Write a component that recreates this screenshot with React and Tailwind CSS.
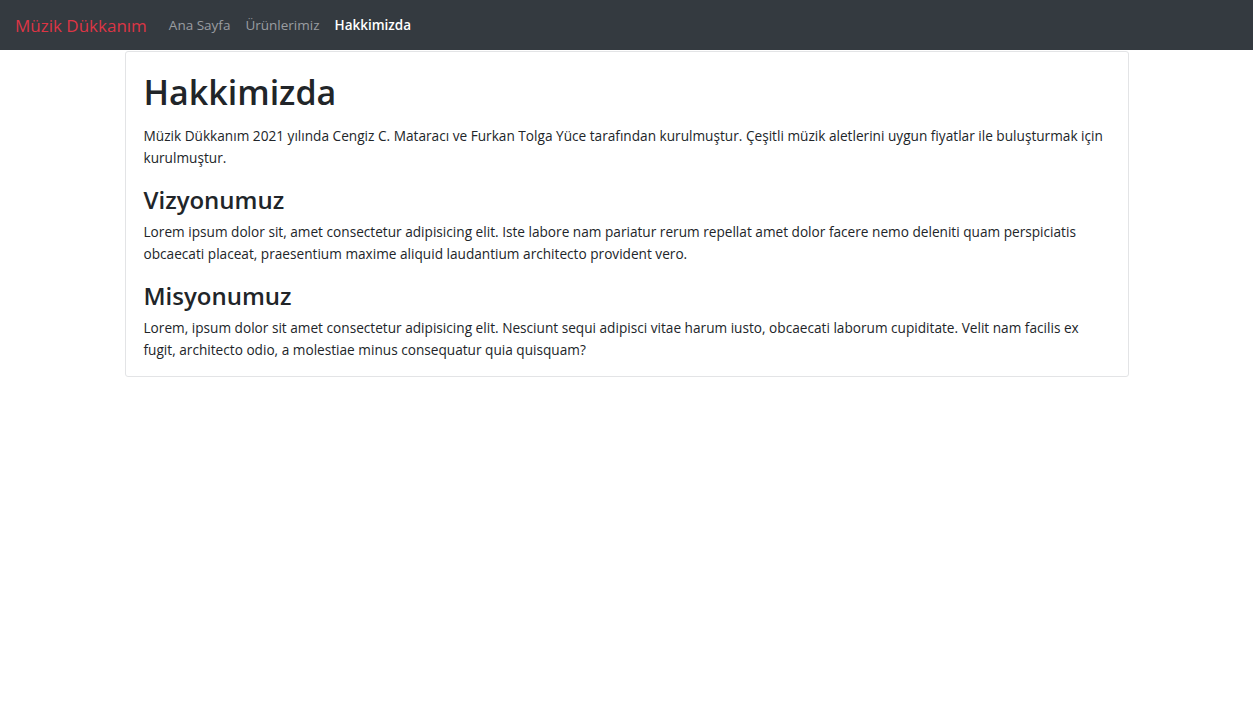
import React from 'react';

const NAV_LINKS = [
  { label: 'Ana Sayfa', active: false },
  { label: 'Ürünlerimiz', active: false },
  { label: 'Hakkimizda', active: true },
];

const font = { fontFamily: '"Open Sans", "Noto Sans", sans-serif' };

const App = () => {
  return (
    <div className="min-h-screen bg-white text-[#212529]" style={font}>
      {/* Navbar */}
      <nav className="h-[50px] bg-[#343a40] flex items-center px-[15px] pt-px">
        <a href="#" className="text-[#dc3545] text-[17px] mr-[22px]">
          Müzik Dükkanım
        </a>
        <div className="flex items-center gap-[15px] text-[13.5px]">
          {NAV_LINKS.map((link) => (
            <a
              key={link.label}
              href="#"
              className={link.active ? 'text-white font-semibold' : 'text-[#9a9da0]'}
            >
              {link.label}
            </a>
          ))}
        </div>
      </nav>

      {/* Hakkimizda kartı */}
      <div className="w-[1004px] mx-auto mt-px border border-[#e3e4e6] rounded-[3px] px-[18px] pt-[19px] pb-[15px]">
        <h1 className="text-[34px] leading-[42px] font-semibold mb-[12px]">Hakkimizda</h1>
        <p className="text-[13.65px] leading-[22px] mb-[16px]">
          Müzik Dükkanım 2021 yılında Cengiz C. Mataracı ve Furkan Tolga Yüce tarafından kurulmuştur. Çeşitli müzik aletlerini uygun fiyatlar ile buluşturmak için kurulmuştur.
        </p>
        <h3 className="text-[24px] leading-[29px] font-semibold mb-[7px]">Vizyonumuz</h3>
        <p className="text-[13.65px] leading-[22px] mb-[16px]">
          Lorem ipsum dolor sit, amet consectetur adipisicing elit. Iste labore nam pariatur rerum repellat amet dolor facere nemo deleniti quam perspiciatis obcaecati placeat, praesentium maxime aliquid laudantium architecto provident vero.
        </p>
        <h3 className="text-[24px] leading-[29px] font-semibold mb-[7px]">Misyonumuz</h3>
        <p className="text-[13.65px] leading-[22px]">
          Lorem, ipsum dolor sit amet consectetur adipisicing elit. Nesciunt sequi adipisci vitae harum iusto, obcaecati laborum cupiditate. Velit nam facilis ex fugit, architecto odio, a molestiae minus consequatur quia quisquam?
        </p>
      </div>
    </div>
  );
};

export default App;
